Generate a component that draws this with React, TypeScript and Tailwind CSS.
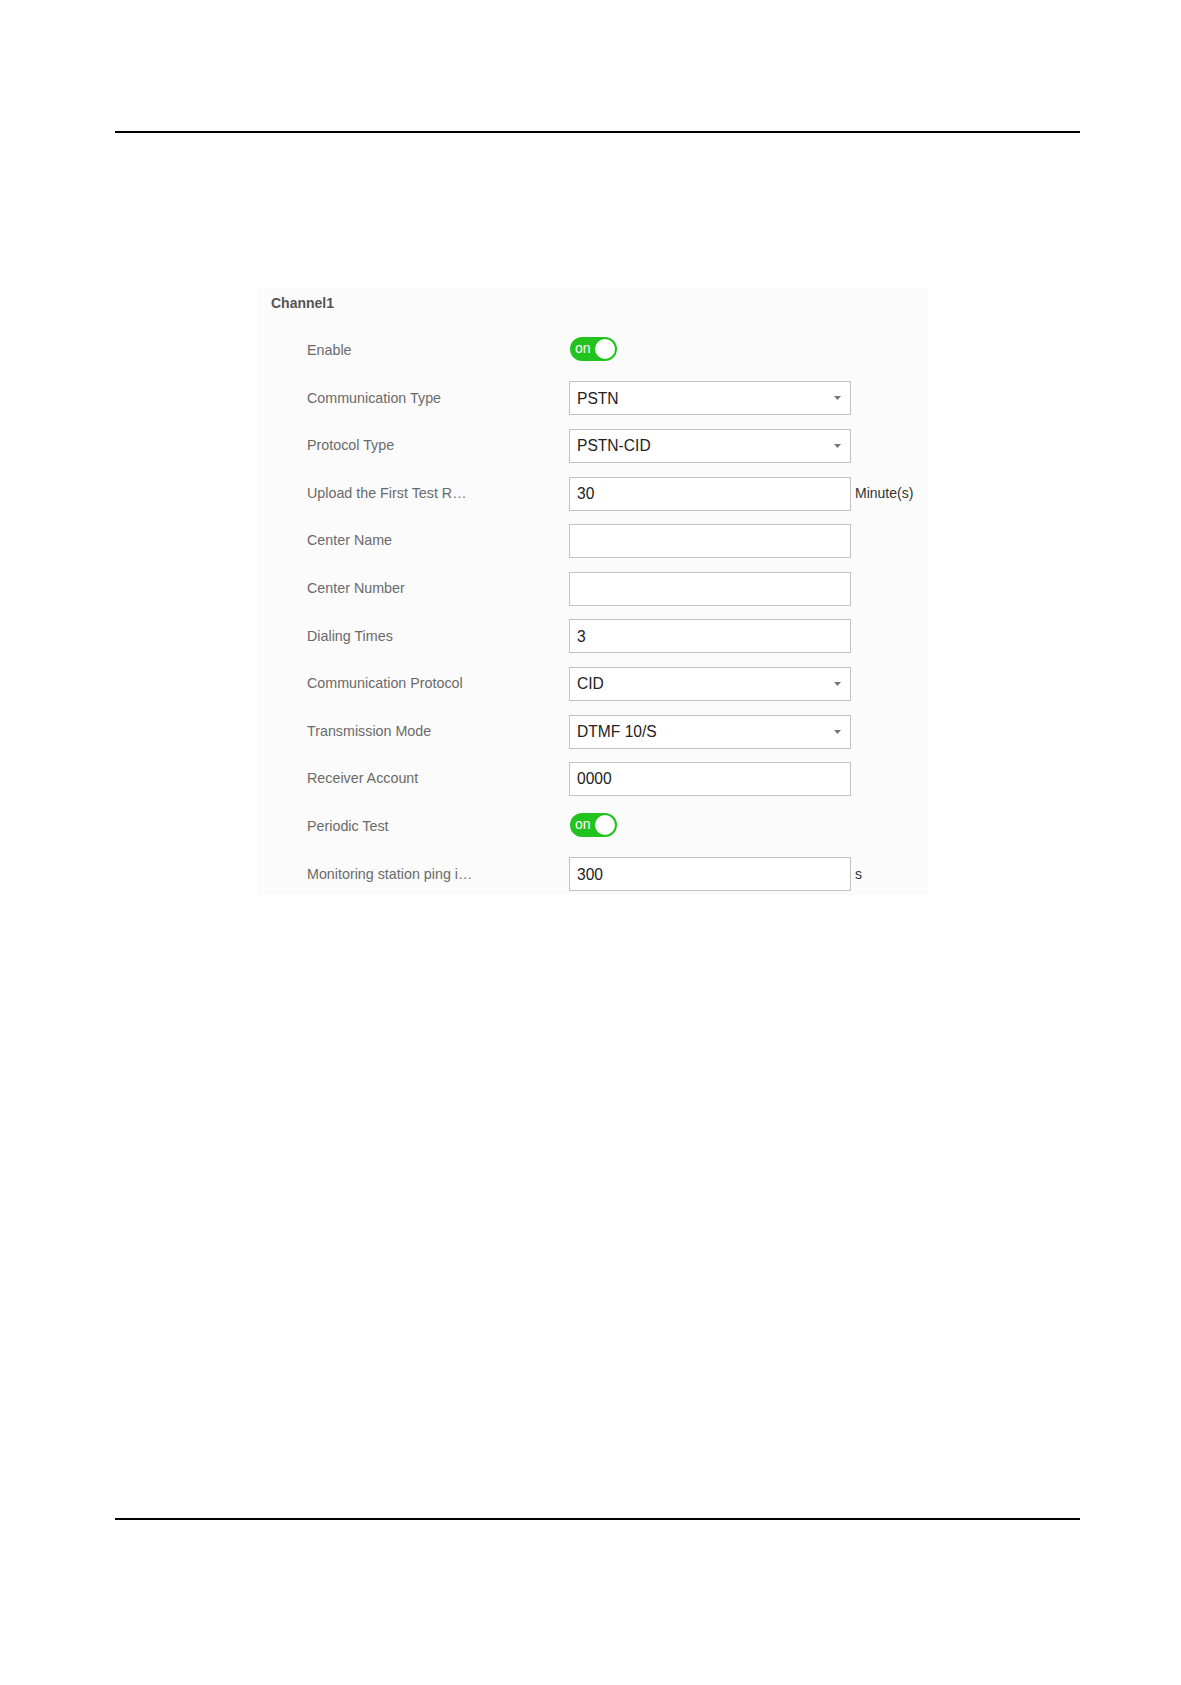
import React from "react";

type Row =
  | { label: string; kind: "toggle" }
  | { label: string; kind: "select"; value: string }
  | { label: string; kind: "input"; value: string; unit?: string };

const rows: Row[] = [
  { label: "Enable", kind: "toggle" },
  { label: "Communication Type", kind: "select", value: "PSTN" },
  { label: "Protocol Type", kind: "select", value: "PSTN-CID" },
  { label: "Upload the First Test R…", kind: "input", value: "30", unit: "Minute(s)" },
  { label: "Center Name", kind: "input", value: "" },
  { label: "Center Number", kind: "input", value: "" },
  { label: "Dialing Times", kind: "input", value: "3" },
  { label: "Communication Protocol", kind: "select", value: "CID" },
  { label: "Transmission Mode", kind: "select", value: "DTMF 10/S" },
  { label: "Receiver Account", kind: "input", value: "0000" },
  { label: "Periodic Test", kind: "toggle" },
  { label: "Monitoring station ping i…", kind: "input", value: "300", unit: "s" },
];

function Toggle() {
  return (
    <div className="-mt-[3px] ml-[1px] flex h-[24px] w-[47px] items-center justify-between rounded-full bg-[#22c21f] pl-[5px] pr-[2px]">
      <span className="-mt-[3px] text-[14px] leading-none text-white">on</span>
      <span className="h-[20px] w-[20px] rounded-full bg-white" />
    </div>
  );
}

function Box({ value, select }: { value: string; select?: boolean }) {
  return (
    <div className="flex h-[34px] w-[282px] items-center justify-between border border-[#c3c3c3] bg-white pl-[7px] pr-[9px]">
      <span className="text-[15.6px] leading-none text-[#222]">{value}</span>
      {select && (
        <svg width="7" height="4" viewBox="0 0 7 4">
          <path d="M0 0 L7 0 L3.5 4 Z" fill="#777" />
        </svg>
      )}
    </div>
  );
}

export default function App() {
  return (
    <div
      className="h-[1685px] w-[1181px] overflow-hidden bg-white pt-[131px]"
      style={{ fontFamily: '"Liberation Sans", Arial, sans-serif' }}
    >
      <div className="ml-[115px] mr-[101px] h-[2px] bg-black" />
      <div className="ml-[257px] mt-[155px] h-[607px] w-[671px] bg-[#fbfbfb]">
        <div className="h-[39px] pl-[14px] pt-[7px] text-[14px] font-bold leading-[16px] text-[#555]">
          Channel1
        </div>
        {rows.map((r, i) => (
          <div key={i} className="flex h-[47.6px] items-center">
            <div className="w-[312px] pl-[50px] text-[14.3px] text-[#6a6a6a]">{r.label}</div>
            {r.kind === "toggle" && <Toggle />}
            {r.kind === "select" && <Box value={r.value} select />}
            {r.kind === "input" && <Box value={r.value} />}
            {r.kind === "input" && r.unit && (
              <span className="ml-[4px] text-[14px] text-[#333]">{r.unit}</span>
            )}
          </div>
        ))}
      </div>
      <div className="ml-[115px] mr-[101px] mt-[623px] h-[2px] bg-black" />
    </div>
  );
}
